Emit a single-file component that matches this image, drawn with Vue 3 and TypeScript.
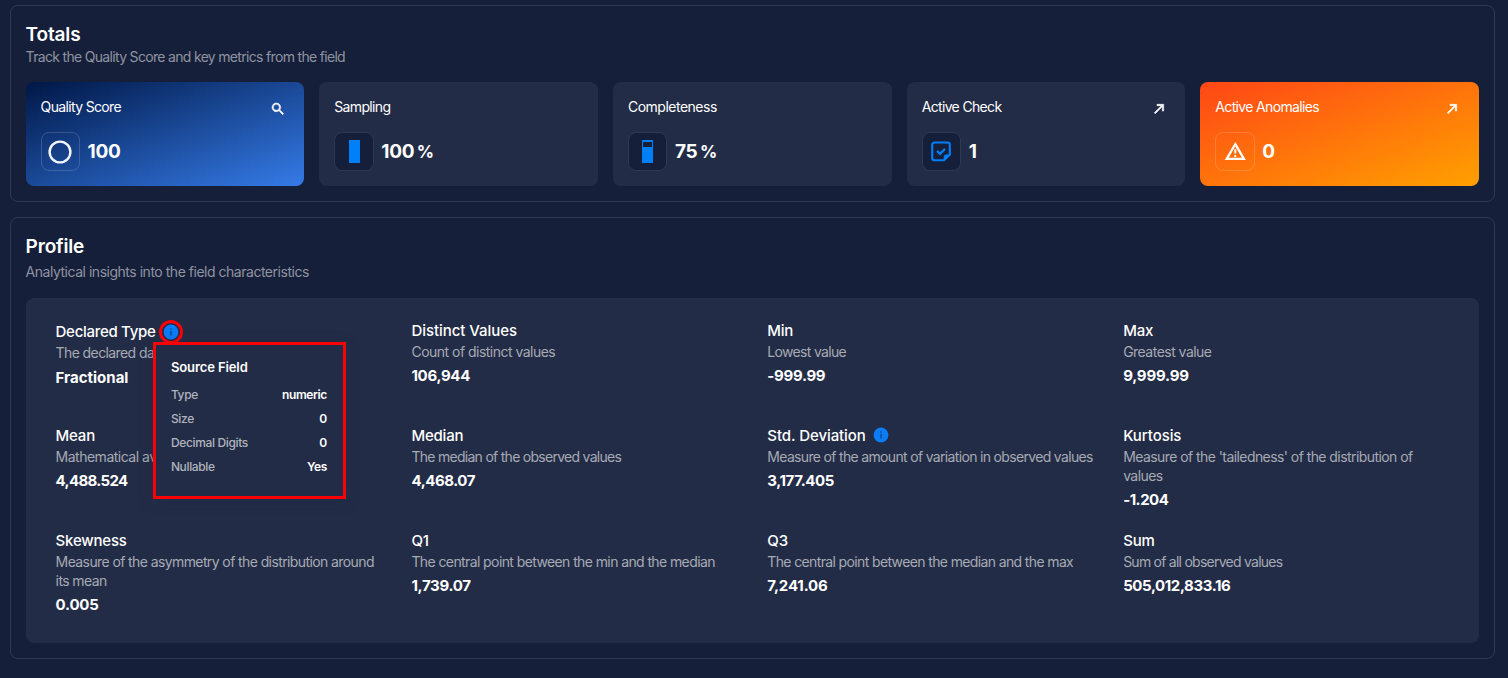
<script setup lang="ts">
interface Total {
  label: string
  value: string
  unit?: string
  icon: 'ring' | 'bar' | 'check' | 'alert'
  fill?: number
  action?: 'search' | 'arrow'
  tone?: 'blue' | 'orange'
  cls: string
}

interface Metric {
  label: string
  text: string
  value: string
  info?: boolean
  source?: boolean
  cls: string
}

const totals: Total[] = [
  { label: 'Quality Score', value: '100', icon: 'ring', action: 'search', tone: 'blue', cls: 'quality' },
  { label: 'Sampling', value: '100', unit: '%', icon: 'bar', fill: 100, cls: 'sampling' },
  { label: 'Completeness', value: '75', unit: '%', icon: 'bar', fill: 75, cls: 'completeness' },
  { label: 'Active Check', value: '1', icon: 'check', action: 'arrow', cls: 'checks' },
  { label: 'Active Anomalies', value: '0', icon: 'alert', action: 'arrow', tone: 'orange', cls: 'anomalies' },
]

const metrics: Metric[] = [
  { label: 'Declared Type', text: 'The declared dat', value: 'Fractional', info: true, source: true, cls: 'declared' },
  { label: 'Distinct Values', text: 'Count of distinct values', value: '106,944', cls: 'distinct' },
  { label: 'Min', text: 'Lowest value', value: '-999.99', cls: 'min' },
  { label: 'Max', text: 'Greatest value', value: '9,999.99', cls: 'max' },
  { label: 'Mean', text: 'Mathematical av', value: '4,488.524', cls: 'mean' },
  { label: 'Median', text: 'The median of the observed values', value: '4,468.07', cls: 'median' },
  { label: 'Std. Deviation', text: 'Measure of the amount of variation in observed values', value: '3,177.405', info: true, cls: 'deviation' },
  { label: 'Kurtosis', text: "Measure of the 'tailedness' of the distribution of\nvalues", value: '-1.204', cls: 'kurtosis' },
  { label: 'Skewness', text: 'Measure of the asymmetry of the distribution around\nits mean', value: '0.005', cls: 'skewness' },
  { label: 'Q1', text: 'The central point between the min and the median', value: '1,739.07', cls: 'q1' },
  { label: 'Q3', text: 'The central point between the median and the max', value: '7,241.06', cls: 'q3' },
  { label: 'Sum', text: 'Sum of all observed values', value: '505,012,833.16', cls: 'sum' },
]

const sourceField = [
  { key: 'Type', value: 'numeric' },
  { key: 'Size', value: '0' },
  { key: 'Decimal Digits', value: '0' },
  { key: 'Nullable', value: 'Yes' },
]
</script>

<template>
  <main class="page">
    <section class="panel">
      <h2>Totals</h2>
      <p class="subtitle track">Track the Quality Score and key metrics from the field</p>
      <div class="cards">
        <article v-for="t in totals" :key="t.label" class="card" :class="[t.tone, t.cls]">
          <header>
            <span class="card-label">{{ t.label }}</span>
            <svg v-if="t.action === 'search'" class="action" viewBox="0 0 24 24">
              <path d="M15.5 14h-.79l-.28-.27A6.47 6.47 0 0 0 16 9.5 6.5 6.5 0 1 0 9.5 16c1.61 0 3.09-.59 4.23-1.57l.27.28v.79l5 4.99L20.49 19l-4.99-5zm-6 0a4.5 4.5 0 1 1 0-9 4.5 4.5 0 0 1 0 9z" fill="#fff" stroke="#fff" stroke-width=".8" />
            </svg>
            <svg v-else-if="t.action === 'arrow'" class="action" viewBox="0 0 24 24">
              <path d="M5 17.59 15.59 7H9V5h10v10h-2V8.41L6.41 19z" fill="#fff" stroke="#fff" stroke-width=".9" />
            </svg>
          </header>
          <div class="reading">
            <span class="tile">
              <svg v-if="t.icon === 'ring'" width="24" height="24" viewBox="0 0 24 24">
                <circle cx="12" cy="12" r="10.4" fill="none" stroke="#f2f5fb" stroke-width="2.4" />
              </svg>
              <span v-else-if="t.icon === 'bar'" class="gauge"><i :style="{ height: t.fill + '%' }" /></span>
              <svg v-else-if="t.icon === 'check'" width="24" height="24" viewBox="0 0 24 24">
                <path d="M15 20.200H5.500a2.300 2.300 0 0 1-2.300-2.300V4.800A2.300 2.300 0 0 1 5.500 2.500h13A2.300 2.300 0 0 1 20.800 4.800v9.600z" fill="none" stroke="#0080f8" stroke-width="2.100" stroke-linejoin="round" />
                <path d="M15 20.800v-4a2 2 0 0 1 2-2H21.500z" fill="#0080f8" stroke="#0080f8" stroke-width=".6" />
                <path d="m8 10.900 3 3 5-5" fill="none" stroke="#0080f8" stroke-width="2.200" />
              </svg>
              <svg v-else width="24" height="24" viewBox="0 0 24 24">
                <path d="M12.300 4.200 20.900 18.800H3.700z" fill="none" stroke="#fff" stroke-width="2.300" />
                <path d="M11.300 9.300h2v4.200h-2zM11.300 14.900h2v2h-2z" fill="#fff" />
              </svg>
            </span>
            <strong>{{ t.value }}<small v-if="t.unit">{{ t.unit }}</small></strong>
          </div>
        </article>
      </div>
    </section>

    <section class="panel profile">
      <h2>Profile</h2>
      <p class="subtitle analytic">Analytical insights into the field characteristics</p>
      <div class="metrics">
        <div v-for="m in metrics" :key="m.label" class="metric" :class="m.cls">
          <div class="metric-label">
            <span>{{ m.label }}</span>
            <span v-if="m.info" class="info">
              <svg width="16" height="16" viewBox="0 0 16 16">
                <circle cx="8" cy="8" r="7.4" fill="#0a7cf5" />
                <path d="M7.300 4.300h1.500v1.400H7.300zM7.300 6.900h1.500v4.600H7.300z" fill="#174a91" />
              </svg>
              <i v-if="m.source" class="halo" />
            </span>
          </div>
          <p>{{ m.text }}</p>
          <b>{{ m.value }}</b>
          <aside v-if="m.source" class="tooltip">
            <h3>Source Field</h3>
            <dl>
              <div v-for="f in sourceField" :key="f.key">
                <dt>{{ f.key }}</dt>
                <dd>{{ f.value }}</dd>
              </div>
            </dl>
          </aside>
        </div>
      </div>
    </section>
  </main>
</template>

<style>
html, body { background: #161f3a; overflow: hidden; }
</style>

<style scoped>
* { box-sizing: border-box; }
.page {
  height: 678px;
  padding: 5px 13px 0 9.6px;
  background: #161f3a;
  color: #fff;
  font-family: Inter, "Noto Sans", sans-serif;
}
.panel {
  height: 197px;
  border: 1px solid #303951;
  border-radius: 8px;
  padding: 16px 15px 0;
}
.profile { height: 442px; margin-top: 15px; }
h2 { margin: 0; font-size: 19px; line-height: 26px; font-weight: 600; letter-spacing: -0.15px; }
.subtitle { margin: 0; font-size: 14px; line-height: 17px; height: 19px; color: #8f93a0; white-space: nowrap; }
.track { letter-spacing: -0.68px; }
.analytic { letter-spacing: -0.48px; }
.profile .subtitle { margin-top: 3px; }
.cards { display: grid; grid-template-columns: repeat(5, 1fr); gap: 15px; margin-top: 15px; }
.card { height: 104px; border-radius: 8px; padding: 14px 15px; background: #232c46; }
.card.blue { background: linear-gradient(160deg, #001746 0%, #357be8 100%); }
.card.orange { background: linear-gradient(160deg, #ff4716 0%, #ffa000 100%); }
.card header { display: flex; justify-content: space-between; height: 36px; }
.card-label { font-size: 14px; line-height: 21px; letter-spacing: -0.65px; white-space: nowrap; }
.completeness .card-label { letter-spacing: -0.5px; }
.action { width: 16px; height: 16px; margin: 5px 3.700px 0 0; }
.reading { display: flex; align-items: center; gap: 7.500px; }
.tile {
  width: 39.500px;
  height: 39px;
  flex: none;
  display: grid;
  place-items: center;
  border: 1px solid #303951;
  border-radius: 8px;
  background: #161f3a;
}
.blue .tile, .orange .tile { background: transparent; border-color: rgba(255, 255, 255, 0.16); }
.gauge { width: 11px; height: 23px; border: solid #0080f8; border-width: 2px 1px 1px; display: flex; align-items: flex-end; }
.gauge i { width: 100%; background: #0080f8; }
.reading strong { font-size: 19px; line-height: 24px; font-weight: 700; letter-spacing: -0.3px; }
.reading small { font-size: 17px; margin-left: 2.500px; }
.metrics {
  display: grid;
  grid-template-columns: repeat(4, 1fr);
  grid-auto-rows: 105px;
  height: 345px;
  margin-top: 16px;
  padding: 21px 0 0 30px;
  border-radius: 8px;
  background: #232c46;
}
.metric { position: relative; }
.metric-label { display: flex; align-items: center; gap: 8px; height: 22px; font-size: 15px; font-weight: 500; letter-spacing: -0.2px; white-space: nowrap; }
.metric p { margin: 1px 0 0; font-size: 14px; line-height: 19px; color: #a6aab4; letter-spacing: -0.6px; white-space: pre; }
.metric b { display: block; margin-top: 5px; font-size: 15px; line-height: 20px; font-weight: 700; letter-spacing: -0.3px; }
.declared { padding-top: 1px; }
.declared .metric-label { letter-spacing: -0.3px; gap: 8px; }
.declared .info { top: 1px; }
.declared b { margin-top: 6px; letter-spacing: 0; }
.distinct .metric-label { letter-spacing: -0.05px; }
.distinct p, .max p { letter-spacing: -0.52px; }
.min p, .deviation p { letter-spacing: -0.67px; }
.median p { letter-spacing: -0.72px; }
.max b { letter-spacing: -0.2px; }
.mean p { letter-spacing: -0.5px; }
.mean b { letter-spacing: -0.65px; }
.median b { letter-spacing: -0.45px; }
.deviation .metric-label, .kurtosis .metric-label { letter-spacing: -0.08px; gap: 7px; }
.deviation b, .sum b { letter-spacing: -0.4px; }
.kurtosis p { letter-spacing: -0.57px; }
.kurtosis b { letter-spacing: -0.5px; }
.skewness b { letter-spacing: -0.2px; }
.q3 p { letter-spacing: -0.63px; }
.q3 b { letter-spacing: -0.15px; }
.sum p { letter-spacing: -0.75px; }
.info { position: relative; display: block; width: 16px; height: 16px; }
.info svg { display: block; }
.halo { position: absolute; inset: -4px; border: 3px solid #fa0007; border-radius: 50%; }
.tooltip {
  position: absolute;
  z-index: 2;
  left: 97.800px;
  top: 23px;
  width: 193px;
  height: 157px;
  padding: 13px 16.500px 0 14.500px;
  border: 3px solid #fa0007;
  background: #232c46;
  box-shadow: 0 3px 12px rgba(24, 46, 80, 0.35);
}
.tooltip h3 { margin: 0; font-size: 13px; line-height: 18px; font-weight: 600; letter-spacing: -0.1px; }
dl { margin: 9.500px 0 0; }
dl div { display: flex; justify-content: space-between; height: 24.330px; line-height: 18px; }
dt { font-size: 12px; color: #b0b4bd; font-weight: 500; letter-spacing: -0.35px; }
dd { margin: 0; font-size: 12px; font-weight: 600; letter-spacing: -0.4px; }
</style>
